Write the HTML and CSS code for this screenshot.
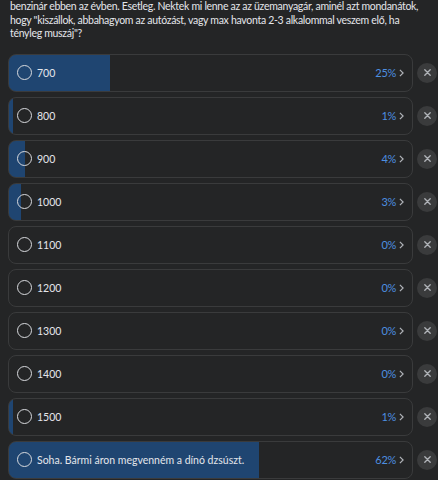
FILE: index.html
```html
<!DOCTYPE html>
<html lang="hu">
<head>
  <meta charset="UTF-8">
  <meta name="viewport" content="width=device-width, initial-scale=1.0">
  <title>Szavazás</title>
  <link rel="stylesheet" href="styles.css">
</head>
<body>

  <p class="question">benzinár ebben az évben. Esetleg. Nektek mi lenne az az üzemanyagár, aminél azt mondanátok,<br>hogy "kiszállok, abbahagyom az autózást, vagy max havonta 2-3 alkalommal veszem elő, ha<br>tényleg muszáj"?</p>

  <div class="poll">
    <div class="option">
      <div class="box" style="--pct: 25%"><span class="radio"></span><span class="label">700</span><span class="pct">25%</span><svg class="chev" viewBox="0 0 6 10"><path d="M1 1l4 4-4 4"/></svg></div>
      <button class="close"><svg viewBox="0 0 10 10"><path d="M2 2l6 6M8 2l-6 6"/></svg></button>
    </div>
    <div class="option">
      <div class="box" style="--pct: 1%"><span class="radio"></span><span class="label">800</span><span class="pct">1%</span><svg class="chev" viewBox="0 0 6 10"><path d="M1 1l4 4-4 4"/></svg></div>
      <button class="close"><svg viewBox="0 0 10 10"><path d="M2 2l6 6M8 2l-6 6"/></svg></button>
    </div>
    <div class="option">
      <div class="box" style="--pct: 4%"><span class="radio"></span><span class="label">900</span><span class="pct">4%</span><svg class="chev" viewBox="0 0 6 10"><path d="M1 1l4 4-4 4"/></svg></div>
      <button class="close"><svg viewBox="0 0 10 10"><path d="M2 2l6 6M8 2l-6 6"/></svg></button>
    </div>
    <div class="option">
      <div class="box" style="--pct: 3%"><span class="radio"></span><span class="label">1000</span><span class="pct">3%</span><svg class="chev" viewBox="0 0 6 10"><path d="M1 1l4 4-4 4"/></svg></div>
      <button class="close"><svg viewBox="0 0 10 10"><path d="M2 2l6 6M8 2l-6 6"/></svg></button>
    </div>
    <div class="option">
      <div class="box" style="--pct: 0%"><span class="radio"></span><span class="label">1100</span><span class="pct">0%</span><svg class="chev" viewBox="0 0 6 10"><path d="M1 1l4 4-4 4"/></svg></div>
      <button class="close"><svg viewBox="0 0 10 10"><path d="M2 2l6 6M8 2l-6 6"/></svg></button>
    </div>
    <div class="option">
      <div class="box" style="--pct: 0%"><span class="radio"></span><span class="label">1200</span><span class="pct">0%</span><svg class="chev" viewBox="0 0 6 10"><path d="M1 1l4 4-4 4"/></svg></div>
      <button class="close"><svg viewBox="0 0 10 10"><path d="M2 2l6 6M8 2l-6 6"/></svg></button>
    </div>
    <div class="option">
      <div class="box" style="--pct: 0%"><span class="radio"></span><span class="label">1300</span><span class="pct">0%</span><svg class="chev" viewBox="0 0 6 10"><path d="M1 1l4 4-4 4"/></svg></div>
      <button class="close"><svg viewBox="0 0 10 10"><path d="M2 2l6 6M8 2l-6 6"/></svg></button>
    </div>
    <div class="option">
      <div class="box" style="--pct: 0%"><span class="radio"></span><span class="label">1400</span><span class="pct">0%</span><svg class="chev" viewBox="0 0 6 10"><path d="M1 1l4 4-4 4"/></svg></div>
      <button class="close"><svg viewBox="0 0 10 10"><path d="M2 2l6 6M8 2l-6 6"/></svg></button>
    </div>
    <div class="option">
      <div class="box" style="--pct: 1%"><span class="radio"></span><span class="label">1500</span><span class="pct">1%</span><svg class="chev" viewBox="0 0 6 10"><path d="M1 1l4 4-4 4"/></svg></div>
      <button class="close"><svg viewBox="0 0 10 10"><path d="M2 2l6 6M8 2l-6 6"/></svg></button>
    </div>
    <div class="option">
      <div class="box" style="--pct: 62%"><span class="radio"></span><span class="label">Soha. Bármi áron megvenném a dínó dzsúszt.</span><span class="pct">62%</span><svg class="chev" viewBox="0 0 6 10"><path d="M1 1l4 4-4 4"/></svg></div>
      <button class="close"><svg viewBox="0 0 10 10"><path d="M2 2l6 6M8 2l-6 6"/></svg></button>
    </div>
  </div>

</body>
</html>
```

FILE: styles.css
```css
body {
  font-family: 'Lato', sans-serif;
  background-color: #242526;
  color: #e4e6eb;
  margin: 0;
  padding: 0 0 0 10px;
}

.question {
  font-size: 10.5px;
  letter-spacing: -0.3px;
  line-height: 13.5px;
  margin: 0 0 13px 0;
  white-space: nowrap;
}

.poll {
  display: flex;
  flex-direction: column;
  gap: 5px;
  margin-left: -2px;
}

.option {
  display: flex;
  align-items: center;
  gap: 4px;
}

.box {
  flex: 0 0 405px;
  height: 38px;
  box-sizing: border-box;
  display: flex;
  align-items: center;
  padding: 0 8px;
  border: 1px solid #3a3b3c;
  border-radius: 8px;
  background: linear-gradient(to right, #1f4571 var(--pct), transparent var(--pct));
  font-size: 10.5px;
}

.radio {
  width: 13px;
  height: 13px;
  border: 1.5px solid #d8dade;
  border-radius: 50%;
  flex-shrink: 0;
}

.label {
  margin-left: 5px;
  flex: 1;
  white-space: nowrap;
}

.pct {
  color: #4d8fe0;
  font-size: 11px;
  letter-spacing: -0.3px;
}

.chev {
  width: 5px;
  height: 8px;
  margin-left: 3px;
}

.chev path {
  fill: none;
  stroke: #b0b3b8;
  stroke-width: 1.5;
}

.close {
  width: 20px;
  height: 20px;
  border-radius: 50%;
  border: none;
  padding: 0;
  background-color: #3a3b3c;
  display: flex;
  align-items: center;
  justify-content: center;
}

.close svg {
  width: 9px;
  height: 9px;
}

.close path {
  stroke: #b0b3b8;
  stroke-width: 1.5;
  stroke-linecap: round;
}
```
